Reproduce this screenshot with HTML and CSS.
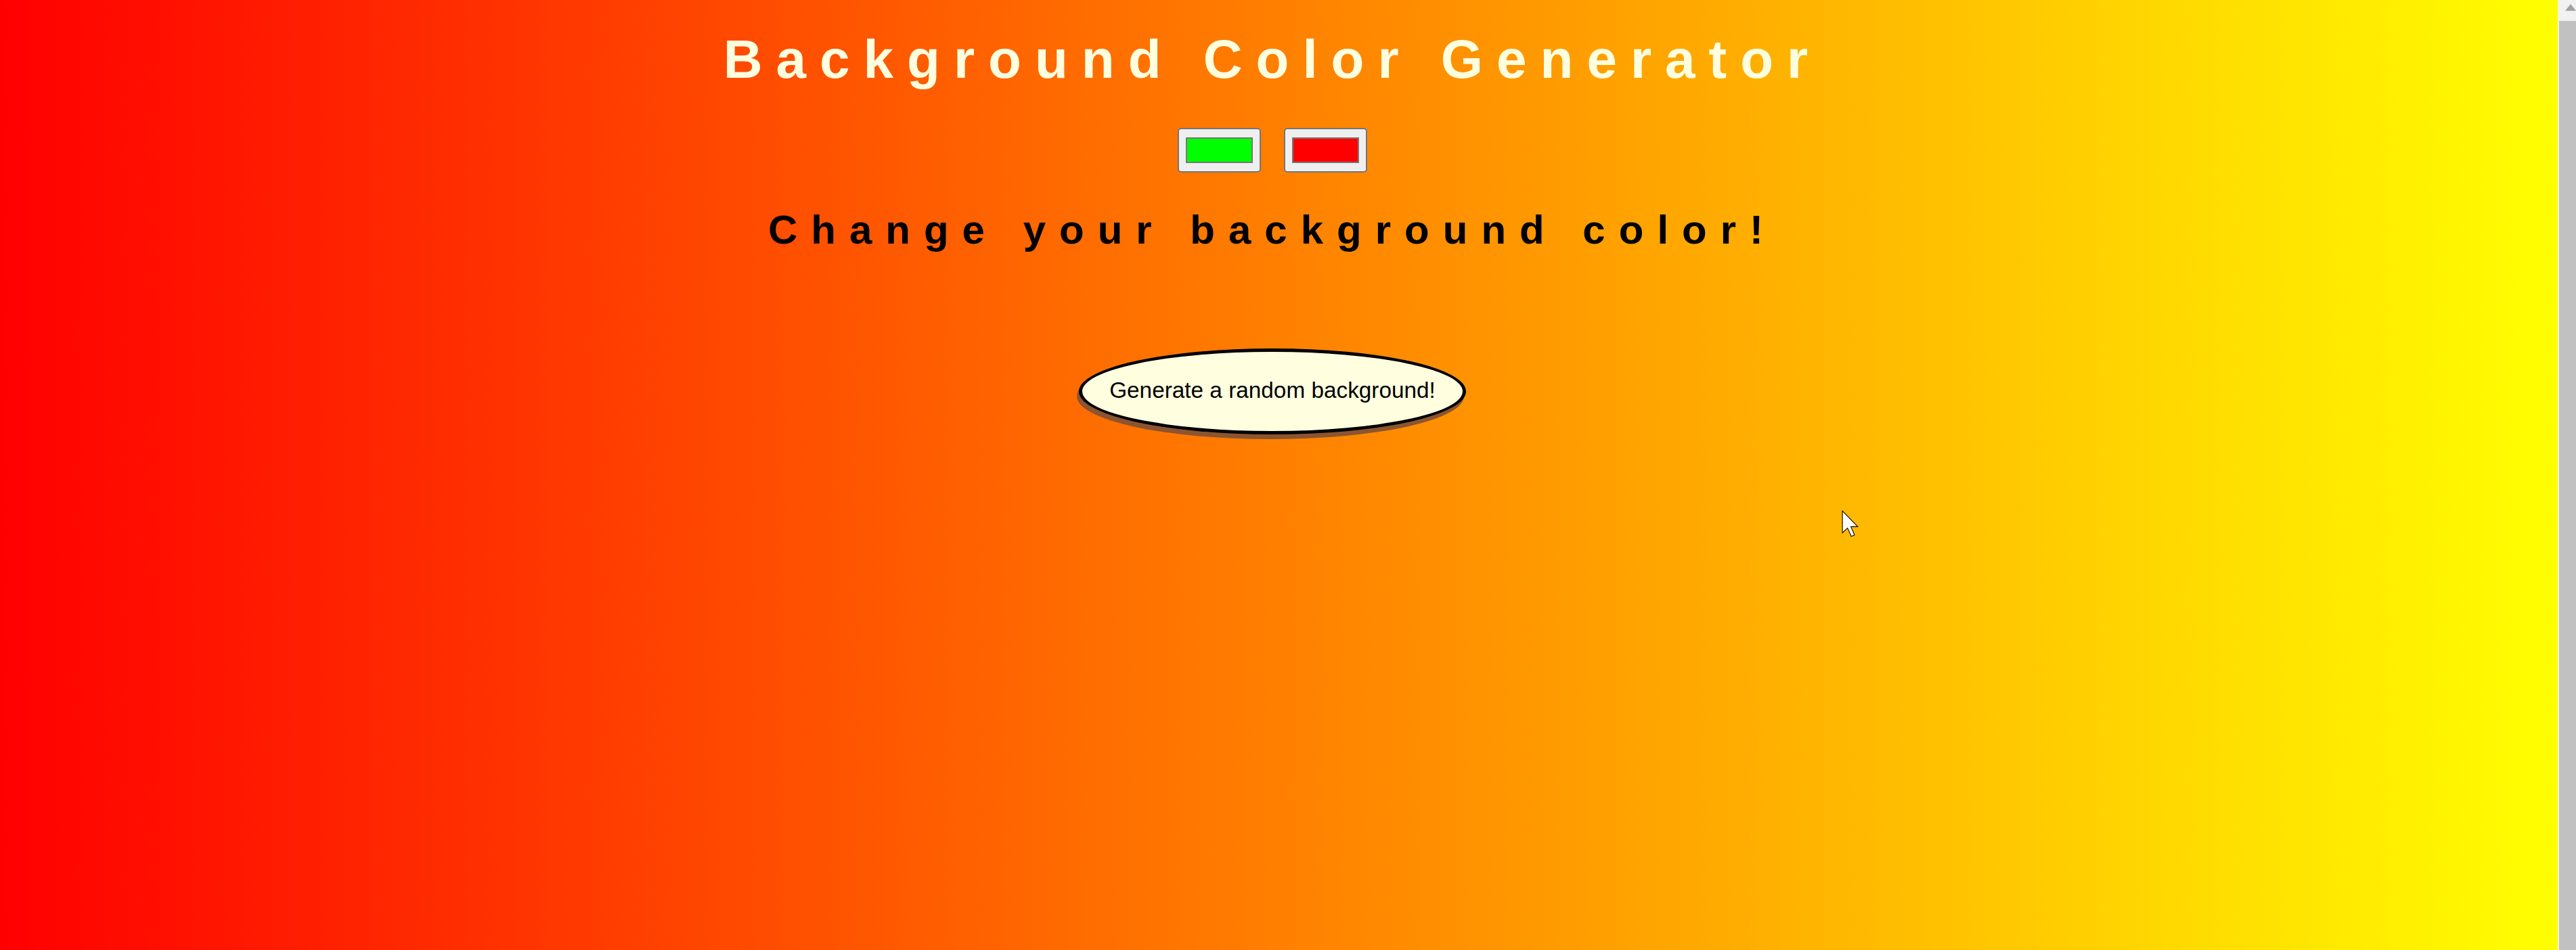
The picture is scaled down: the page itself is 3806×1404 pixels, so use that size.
FILE: index.html
```html
<!DOCTYPE html>
<html lang="en">
<head>
<meta charset="utf-8">
<title>Background Color Generator</title>
<link rel="stylesheet" href="styles.css">
</head>
<body>
<main class="page">
  <h1 class="title">Background Color Generator</h1>
  <div class="pickers">
    <input class="picker" type="color" value="#00ff00">
    <input class="picker" type="color" value="#ff0000">
  </div>
  <h2 class="subtitle">Change your background color!</h2>
  <div class="actions">
    <button class="generate" type="button">Generate a random background!</button>
  </div>
  <svg class="cursor" width="26" height="41" viewBox="0 0 12 19" aria-hidden="true">
    <path d="M0.5 0.5 L0.5 15.5 L4 12.2 L6.6 18 L8.8 17 L6.3 11.3 L11 11.3 Z" fill="#fff" stroke="#000" stroke-width="0.5" stroke-linejoin="miter"/>
  </svg>
</main>
<div class="scrollbar" aria-hidden="true">
  <div class="scroll-up"><span class="arrow"></span></div>
  <div class="scroll-thumb"></div>
</div>
</body>
</html>
```

FILE: styles.css
```css
html, body {
  margin: 0;
  height: 1404px;
  overflow: hidden;
}

body {
  display: flex;
  font-family: "Liberation Sans", Arial, sans-serif;
}

.page {
  flex: 1;
  position: relative;
  padding: 0 39px 0 20px;
  background: linear-gradient(to right, #ff0000, #ffff00);
  text-align: center;
}

.title {
  margin: 42px 0 0;
  font-size: 80px;
  line-height: 92px;
  font-weight: bold;
  letter-spacing: 20px;
  color: #ffffe0;
}

.pickers {
  display: flex;
  justify-content: center;
  gap: 34px;
  margin-top: 55px;
}

.picker {
  -webkit-appearance: none;
  appearance: none;
  box-sizing: border-box;
  width: 123px;
  height: 66px;
  margin: 0;
  padding: 12px 10px;
  border: 2px solid #767676;
  border-radius: 5px;
  background: #efefef;
  cursor: pointer;
}

.picker::-webkit-color-swatch-wrapper {
  padding: 0;
}

.picker::-webkit-color-swatch {
  border: 2px solid #777777;
  border-radius: 0;
}

.subtitle {
  margin: 50px 0 0;
  font-size: 60px;
  line-height: 69px;
  font-weight: bold;
  letter-spacing: 20px;
  color: #000;
}

.actions {
  display: flex;
  justify-content: center;
  margin-top: 141px;
}

.generate {
  font-family: "Liberation Sans", Arial, sans-serif;
  font-size: 33.33px;
  line-height: 38px;
  color: #000;
  background: #ffffe0;
  padding: 38px 40px 41px;
  border: 5px solid #000;
  border-radius: 50%;
  box-shadow: -3px 7px 0 #8a5530;
}

.cursor {
  position: absolute;
  left: 2721px;
  top: 754px;
}

.scrollbar {
  width: 27px;
  display: flex;
  flex-direction: column;
  background: #f1f1f1;
}

.scroll-up {
  height: 31px;
  position: relative;
  overflow: hidden;
}

.arrow {
  position: absolute;
  left: 11px;
  top: 6px;
  width: 0;
  height: 0;
  border-left: 8px solid transparent;
  border-right: 8px solid transparent;
  border-bottom: 10px solid #a3a3a3;
}

.scroll-thumb {
  flex: 1;
  margin-left: 2px;
  background: #c1c1c1;
}
```
